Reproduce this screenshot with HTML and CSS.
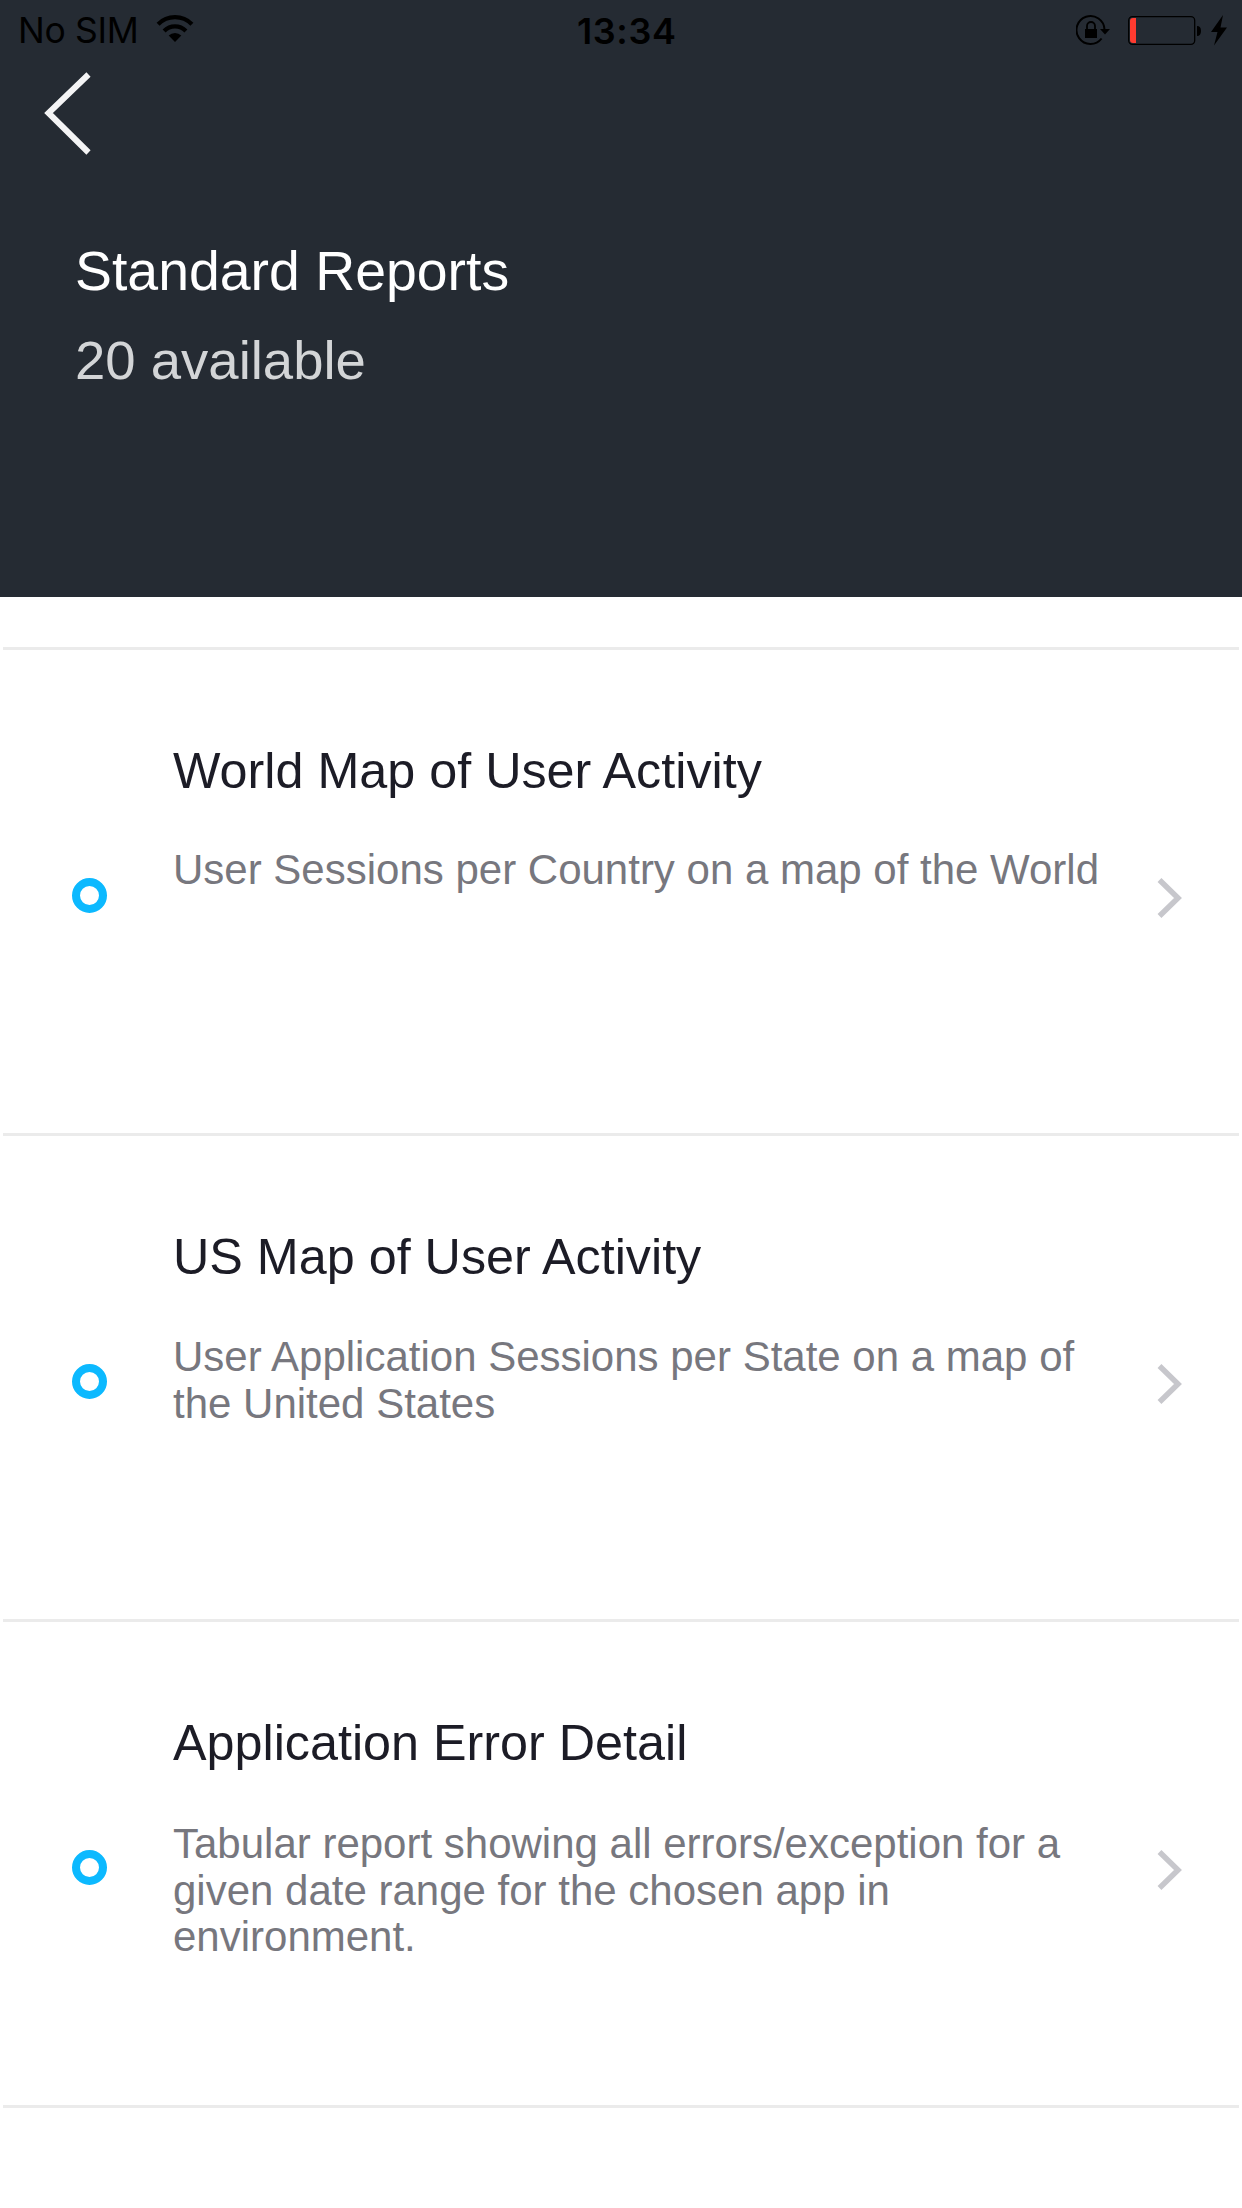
FILE: index.html
```html
<!DOCTYPE html>
<html lang="en">
<head>
<meta charset="utf-8">
<title>Standard Reports</title>
<link rel="stylesheet" href="styles.css">
</head>
<body>
<header class="header">
  <div class="status">
    <div class="status-left">
      <span class="carrier">No SIM</span>
      <svg class="wifi" width="38" height="28" viewBox="0 0 38 28">
        <g fill="none" stroke="#000" stroke-width="4.2">
          <path d="M2.100 9.200a23.800 23.800 0 0 1 33.800 0"/>
          <path d="M8.100 15.900a15.400 15.400 0 0 1 21.800 0"/>
        </g>
        <path d="M19 27l-6.300-6.400a9 9 0 0 1 12.600 0z"/>
      </svg>
    </div>
    <span class="time">13:34</span>
    <svg class="status-right" width="152" height="32" viewBox="0 0 152 32">
      <path d="M28.500 15.500A14 14 0 1 0 25.600 24.500" fill="none" stroke="#000" stroke-width="2"/>
      <path d="M24 15h10l-5 5.500z"/>
      <path d="M9 15h12v9H9z"/>
      <path d="M11 16v-4a4 4 0 0 1 8 0v4" fill="none" stroke="#000" stroke-width="1.800"/>
      <rect x="52.700" y="2.700" width="66" height="27.600" rx="3.800" fill="none" stroke="#000" stroke-width="1.300"/>
      <path d="M57 4h3v25h-3q-3 0-3-3V7q0-3 3-3z" fill="#ff3b30"/>
      <path d="M121 12q4 0 4 5t-4 5z"/>
      <path d="M147 1l-12 17h6.500l-3.500 13.500 13-18h-6.500z"/>
    </svg>
  </div>
  <svg class="back" width="54" height="90" viewBox="0 0 54 90">
    <path d="M47.500 4.500L7.500 43 47.500 82.500" fill="none" stroke="#f4f4f5" stroke-width="6"/>
  </svg>
  <h1 class="title">Standard Reports</h1>
  <p class="count">20 available</p>
</header>
<main class="list">
  <article class="item">
    <span class="ring"></span>
    <div class="text">
      <h2 class="name">World Map of User Activity</h2>
      <p class="desc">User Sessions per Country on a map of the World</p>
    </div>
    <svg class="chevron" width="26" height="40" viewBox="0 0 26 40"><path d="M2.500 2L21 20 2.500 38" fill="none" stroke="#c7c7cc" stroke-width="5.500"/></svg>
  </article>
  <article class="item">
    <span class="ring"></span>
    <div class="text">
      <h2 class="name">US Map of User Activity</h2>
      <p class="desc desc-two">User Application Sessions per State on a map of<br>the United States</p>
    </div>
    <svg class="chevron" width="26" height="40" viewBox="0 0 26 40"><path d="M2.500 2L21 20 2.500 38" fill="none" stroke="#c7c7cc" stroke-width="5.500"/></svg>
  </article>
  <article class="item">
    <span class="ring"></span>
    <div class="text">
      <h2 class="name">Application Error Detail</h2>
      <p class="desc desc-three">Tabular report showing all errors/exception for a<br>given date range for the chosen app in<br>environment.</p>
    </div>
    <svg class="chevron" width="26" height="40" viewBox="0 0 26 40"><path d="M2.500 2L21 20 2.500 38" fill="none" stroke="#c7c7cc" stroke-width="5.500"/></svg>
  </article>
</main>
</body>
</html>
```
FILE: styles.css
```css
* { box-sizing: border-box; }
body {
  margin: 0;
  width: 1242px;
  height: 2208px;
  overflow: hidden;
  background: #fff;
  font-family: "Liberation Sans", Arial, sans-serif;
}
h1, h2, p { margin: 0; font-weight: 400; white-space: nowrap; }
svg { display: block; flex: none; }

.header { height: 597px; background: #252b33; }
.status {
  display: grid;
  grid-template-columns: 577px 1fr auto;
  height: 60px;
  padding-right: 14px;
  font-family: Inter, sans-serif;
  font-size: 36px;
  line-height: 62px;
  color: #000;
}
.status-left { display: flex; padding-left: 18px; }
.carrier { width: 138px; font-size: 35.5px; letter-spacing: -0.3px; }
.wifi { margin-top: 15px; }
.time { font-weight: 600; letter-spacing: 0.6px; }
.status-right { margin-top: 14px; }
.back { margin: 10px 0 0 41px; }
.title {
  margin-top: 78px;
  padding-left: 75px;
  font-size: 55.4px;
  line-height: 66px;
  color: #fff;
}
.count {
  margin-top: 24px;
  padding-left: 75px;
  font-size: 54.5px;
  line-height: 66px;
  color: #d3d5d7;
}

.list { margin: 50px 3px 0; border-bottom: 3px solid #ebebeb; }
.item {
  display: flex;
  height: 486px;
  border-top: 3px solid #ebebeb;
  padding-left: 69px;
}
.ring {
  flex: none;
  width: 35px;
  height: 35px;
  margin-top: 228px;
  border: 8.5px solid #0cb9ff;
  border-radius: 50%;
  filter: blur(0.7px);
}
.text { flex: none; width: 1047px; padding: 91px 0 0 66px; }
.name { font-size: 50.3px; line-height: 60px; color: #1c1c26; }
.desc { margin-top: 46px; font-size: 42px; line-height: 46.5px; color: #77777e; }
.desc-two { margin-top: 47px; }
.desc-three { margin-top: 48px; }
.chevron { margin: 228px 0 0 3px; }
```
